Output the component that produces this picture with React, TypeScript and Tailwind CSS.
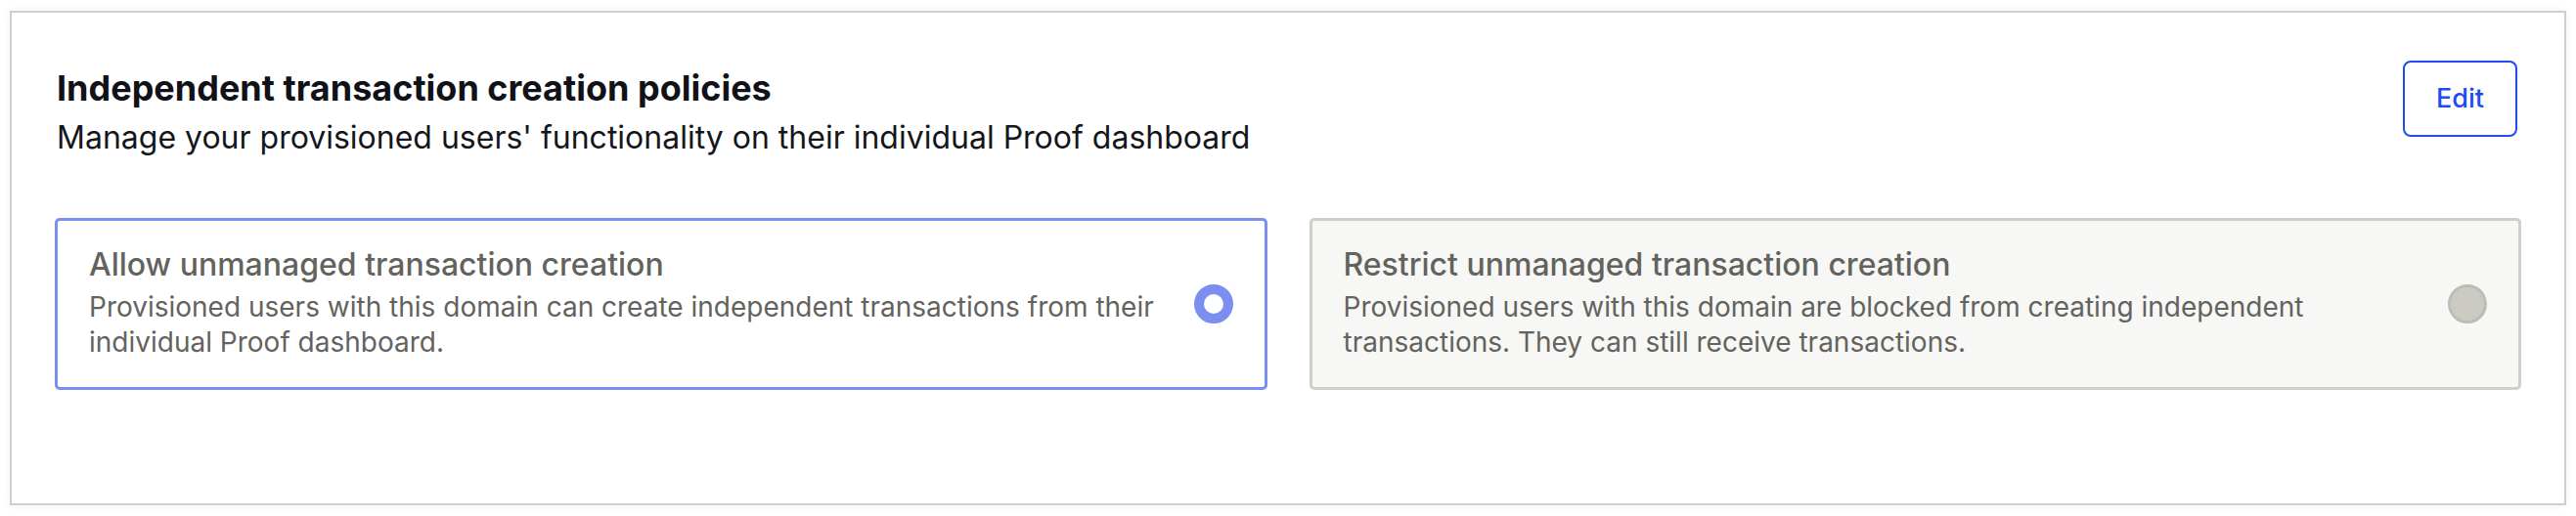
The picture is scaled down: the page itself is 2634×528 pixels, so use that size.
import React from "react";

function Option({
  title,
  desc,
  selected,
}: {
  title: string;
  desc: string;
  selected: boolean;
}) {
  return (
    <div
      className={
        selected
          ? "flex items-center gap-[40px] rounded-[5px] border-[3px] border-[#7b8ff0] bg-white px-[32px] pt-[27px] pb-[28px]"
          : "flex items-center gap-[40px] rounded-[5px] border-[3px] border-[#cfcfc7] bg-[#f7f7f5] px-[32px] pt-[27px] pb-[28px]"
      }
    >
      <div className="flex flex-1 flex-col gap-[7px]">
        <div className="text-[32px] font-medium leading-[36px] text-[#63635e]">{title}</div>
        <div className="text-[28px] leading-[36px] text-[#63635e]">{desc}</div>
      </div>
      {selected ? (
        <div className="h-[40px] w-[40px] shrink-0 rounded-full border-[10px] border-[#7b8ff0] bg-white" />
      ) : (
        <div className="h-[40px] w-[40px] shrink-0 rounded-full border-[3px] border-[#bdbdb5] bg-[#cbcbc3]" />
      )}
    </div>
  );
}

export default function App() {
  return (
    <div
      className="min-h-[528px] bg-white pl-[10px] pt-[11px]"
      style={{ fontFamily: "Inter, 'Noto Sans', sans-serif" }}
    >
      <div className="w-[2614px] border-2 border-[#cfcfc7] bg-white px-[44px] pt-[49px] pb-[116px] shadow-[0_0_8px_rgba(0,0,0,0.06)]">
        <div className="flex items-start justify-between">
          <div className="pl-[2px] pt-[6px]">
            <h1 className="text-[36px] font-bold leading-[44px] text-[#101218]">
              Independent transaction creation policies
            </h1>
            <p className="mt-[9px] text-[32px] leading-[40px] text-[#15161a]">
              Manage your provisioned users' functionality on their individual Proof dashboard
            </p>
          </div>
          <button className="mr-[4px] flex h-[78px] w-[117px] items-center justify-center rounded-[8px] border-2 border-[#1f4bf0] text-[27px] font-medium text-[#1f4bf0]">
            Edit
          </button>
        </div>
        <div className="mt-[62px] grid grid-cols-2 gap-[43px]">
          <Option
            selected
            title="Allow unmanaged transaction creation"
            desc="Provisioned users with this domain can create independent transactions from their individual Proof dashboard."
          />
          <Option
            selected={false}
            title="Restrict unmanaged transaction creation"
            desc="Provisioned users with this domain are blocked from creating independent transactions. They can still receive transactions."
          />
        </div>
      </div>
    </div>
  );
}
